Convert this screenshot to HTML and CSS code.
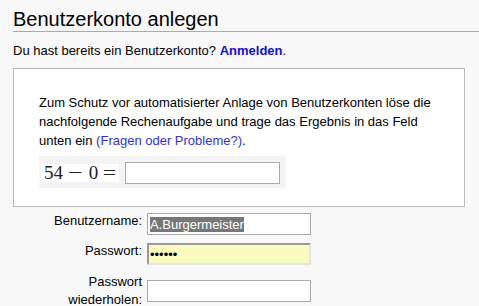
FILE: index.html
```html
<!DOCTYPE html>
<html lang="de">
<head>
	<meta charset="UTF-8">
	<title>Benutzerkonto anlegen</title>
	<link rel="stylesheet" href="styles.css">
</head>
<body>
	<div class="page">
		<h1 class="page-title">Benutzerkonto anlegen</h1>
		<p class="login-hint">Du hast bereits ein Benutzerkonto? <a href="#" class="link-strong">Anmelden</a>.</p>

		<!-- Captcha -->
		<div class="captcha-box">
			<p class="captcha-text">Zum Schutz vor automatisierter Anlage von Benutzerkonten löse die nachfolgende Rechenaufgabe und trage das Ergebnis in das Feld unten ein <a href="#" class="link-help">(Fragen oder Probleme?)</a>.</p>
			<div class="captcha-row">
				<span class="math"><span class="num">54</span><span class="op op-minus"><span>−</span></span><span class="num">0</span><span class="op op-eq"><span>=</span></span></span>
				<input type="text" class="field field-captcha">
			</div>
		</div>

		<!-- Formular -->
		<div class="signup-form">
			<label class="form-label single">Benutzername:</label>
			<div class="field field-user"><span class="selected">A.Burgermeister</span></div>

			<label class="form-label single">Passwort:</label>
			<input type="password" class="field field-pass" value="geheim">

			<label class="form-label">Passwort wiederholen:</label>
			<input type="password" class="field">
		</div>
	</div>
</body>
</html>
```

FILE: styles.css
```css
* {
	box-sizing: border-box;
}

body {
	margin: 0;
	background-color: #f8f8f8;
	color: #000;
	font-family: "Liberation Sans", Arial, sans-serif;
	font-size: 13px;
	line-height: 19px;
}

.page {
	padding: 0 14px 0 13px;
}

h1.page-title {
	margin: 7px -14px 0 0;
	padding: 0;
	font-size: 20px;
	font-weight: normal;
	line-height: 24px;
	border-bottom: 1px solid #aaa;
}

p.login-hint {
	margin: 9px 0 8px;
}

a {
	text-decoration: none;
}

a.link-strong {
	color: #1111cc;
	font-weight: bold;
}

a.link-help {
	color: #3333cc;
}

div.captcha-box {
	background-color: #fff;
	border: 1px solid #bbb;
	padding: 24px 25px 18px;
}

p.captcha-text {
	margin: 0 0 6px;
}

div.captcha-row {
	display: flex;
	align-items: center;
	width: fit-content;
	padding: 6px 6px 4px 2px;
	background-color: #f4f4f4;
	gap: 6px;
}

span.math {
	display: inline-flex;
	align-items: center;
	width: 78px;
	height: 18px;
	padding: 0 3px;
	background-color: #fff;
	font-family: "Liberation Serif", "Times New Roman", serif;
	font-size: 19px;
	line-height: 18px;
	color: #222;
}

span.math .op {
	display: inline-block;
	text-align: center;
}

span.math .op > span {
	display: inline-block;
}

span.math .op-minus {
	width: 15px;
	margin: 0 6px 0 5px;
}

span.math .op-minus > span {
	transform: scaleX(1.4);
}

span.math .op-eq {
	width: 13px;
	margin-left: 5px;
}

span.math .op-eq > span {
	transform: scaleX(1.25);
}

.field {
	display: block;
	width: 164px;
	height: 22px;
	margin: 0;
	padding: 0 2px;
	border: 1px solid #aaa;
	background-color: #fff;
	font-family: "Liberation Sans", Arial, sans-serif;
	font-size: 13px;
	color: #000;
	outline: none;
}

.field-captcha {
	width: 155px;
}

div.field-user {
	display: flex;
	align-items: center;
}

div.field-user .selected {
	background-color: #777;
	color: #fff;
	line-height: 15px;
}

input.field-pass {
	border-width: 2px;
	border-color: #999 #e4e4e4 #e4e4e4 #999;
	padding-left: 1px;
	background-color: #fafbbf;
}

div.signup-form {
	display: grid;
	grid-template-columns: 88px 164px;
	column-gap: 5px;
	row-gap: 8px;
	align-items: center;
	margin: 6px 0 0 41px;
}

label.form-label {
	text-align: right;
	line-height: 18px;
}

label.form-label.single {
	line-height: 16px;
	padding-bottom: 6px;
}
```
